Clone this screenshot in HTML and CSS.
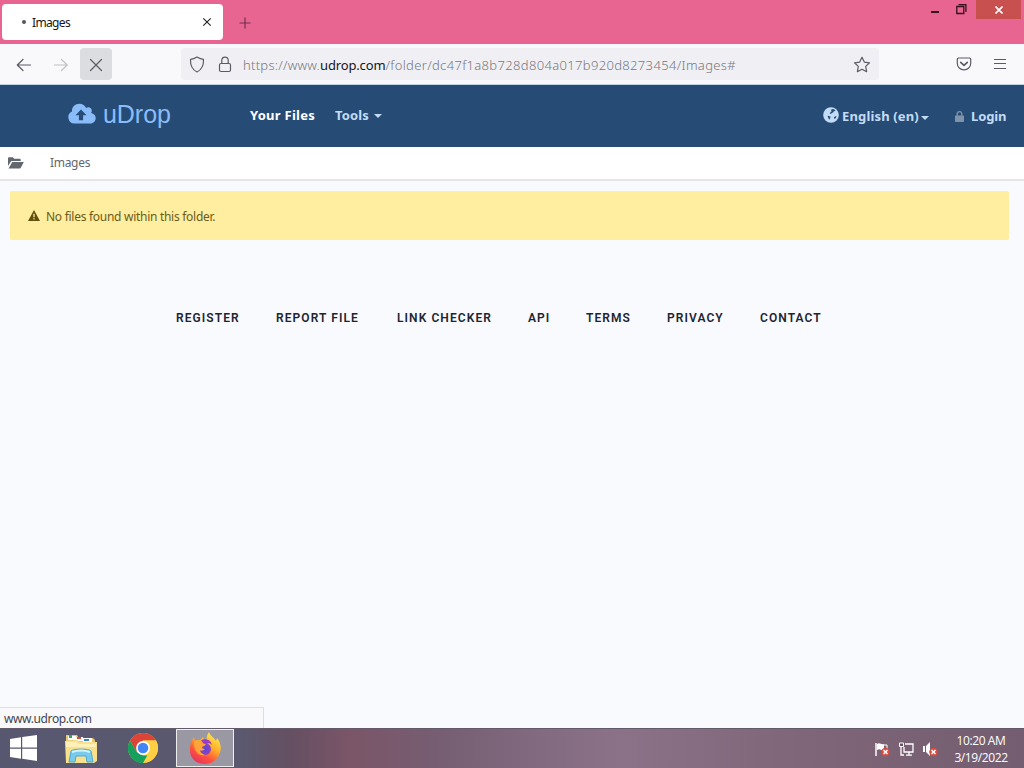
FILE: index.html
```html
<!DOCTYPE html>
<html lang="en">
<head>
<meta charset="utf-8">
<title>Images</title>
<link rel="stylesheet" href="styles.css">
</head>
<body>
<div class="screen">
  <header class="titlebar">
    <div class="tab"><span class="tab-dot"></span><span class="tab-title">Images</span>
      <svg class="tab-close" width="10" height="10" viewBox="0 0 10 10"><path d="M1.300 1.300l7.400 7.400M8.700 1.300L1.300 8.700" stroke="#222" stroke-width="1.1"/></svg>
    </div>
    <svg class="new-tab" width="12" height="12" viewBox="0 0 12 12"><path d="M6 .5v11M.5 6h11" stroke="#71324e" stroke-width="1.2"/></svg>
    <div class="window-controls">
      <svg width="8" height="19" viewBox="0 0 8 19"><path d="M0 12h8" stroke="#35101f" stroke-width="2"/></svg>
      <svg class="restore" width="11" height="19" viewBox="0 0 11 19"><path d="M.8 6.500h7v7h-7zM2.500 4.600h7.400V12" fill="none" stroke="#35101f" stroke-width="1.3"/></svg>
      <div class="window-close"><svg width="8" height="8" viewBox="0 0 8 8"><path d="M.5.5l7 7M7.500.5l-7 7" stroke="#fff" stroke-width="1.6"/></svg></div>
    </div>
  </header>

  <div class="toolbar">
    <svg class="back" width="16" height="14" viewBox="0 0 16 14"><path d="M14.500 7H1.500M7 1.500L1.300 7 7 12.500" class="line"/></svg>
    <svg class="forward" width="16" height="14" viewBox="0 0 16 14"><path d="M0 7h13M7.500 1.500L13.200 7l-5.700 5.500" class="line"/></svg>
    <div class="stop"><svg width="14" height="14" viewBox="0 0 14 14"><path d="M1.500 1.500l11 11M12.500 1.500l-11 11" class="line"/></svg></div>
    <div class="address">
      <svg class="shield" width="16" height="17" viewBox="0 0 16 17"><path d="M8 1c2 1.300 4 2.200 6.500 2.400C14.800 9.500 13 13.500 8 16 3 13.500 1.200 9.500 1.500 3.400 4 3.200 6 2.300 8 1z" class="line"/></svg>
      <svg class="padlock" width="14" height="17" viewBox="0 0 14 17"><rect x="1.500" y="7.500" width="11" height="8" rx="1.500" class="line"/><path d="M3.800 7.500V4.300a3.200 3.200 0 0 1 6.400 0v3.200" class="line"/></svg>
      <span class="url">https://www.<span class="host">udrop.com</span><span class="path">/folder/dc47f1a8b728d804a017b920d8273454/Images#</span></span>
      <svg class="star" width="18" height="17" viewBox="0 0 18 17"><path d="M9 1.300l2.300 4.800 5.200.7-3.800 3.600.9 5.300L9 13.200l-4.600 2.500.9-5.300-3.800-3.600 5.200-.7z" class="line"/></svg>
    </div>
    <svg class="pocket" width="16" height="14" viewBox="0 0 16 14"><path d="M2.500 1h11c.7 0 1.200.5 1.200 1.200v4.300a6.700 6.300 0 0 1-13.400 0V2.200C1.300 1.500 1.800 1 2.500 1z" class="line"/><path d="M4.700 5.300L8 8.300l3.300-3" class="line bold"/></svg>
    <svg class="menu" width="12" height="12" viewBox="0 0 12 12"><path d="M0 1.500h12M0 5.500h12M0 10.500h12" class="line"/></svg>
  </div>

  <nav class="navbar">
    <svg class="cloud" width="28" height="21" viewBox="0 0 28 21"><path fill="#8bbcfa" d="M6.500 20.500A6.300 6.300 0 0 1 4 8.500C3.800 4 7 .8 11.300.8c3.300 0 5.700 1.700 6.800 4.300 2.300-1.800 5.700-.3 5.700 2.700 0 .9-.2 1.600-.6 2.200 2.800.5 4.500 2.500 4.500 5 0 3-2.300 5.500-5.500 5.500z"/><path fill="#264c76" d="M13 6.500l5.500 5.700h-3.400v5h-4.200v-5H7.500z"/></svg>
    <span class="brand">uDrop</span>
    <span class="nav-files">Your Files</span>
    <span class="nav-tools">Tools</span><i class="caret tools-caret"></i>
    <svg class="globe" width="16" height="16" viewBox="0 0 16 16"><circle cx="8" cy="8" r="7.800" fill="#c3dcf5"/><path fill="#264c76" d="M9 2l2.500.6 1 1.400-1.800.2-.5 1.300-1.400.4-.8 1-1.200-.5.900-1.600L9 4.200 7.800 3.300zM4.500 8.700l1.500.2 1.600.8-.5 1.600-1 1.500-.8-2zM12.200 9.200l1.400.4-1.100 2-1.200.1-.4-1.200z"/></svg>
    <span class="nav-lang">English (en)</span><i class="caret lang-caret"></i>
    <svg class="lock" width="9" height="11" viewBox="0 0 9 11"><path d="M2.200 5V3a2.300 2.300 0 0 1 4.600 0v2" fill="none" stroke="#8193ab" stroke-width="1.300"/><rect y="4.500" width="9" height="6.500" rx=".7" fill="#8193ab"/></svg>
    <span class="nav-login">Login</span>
  </nav>

  <div class="crumbs">
    <svg class="folder" width="16" height="12" viewBox="0 0 16 12"><path fill="#626770" d="M0 9V1.500C0 .8.500.3 1.200.3h3.600L6.300 1.800h5.200c.7 0 1.200.5 1.200 1.200v1H4.200c-.8 0-1.300.3-1.600.9zM4.300 5h11.500l-3 5.800c-.2.500-.5.700-1 .7H.5z"/></svg>
    <span class="crumb">Images</span>
  </div>

  <main class="content">
    <div class="notice">
      <svg width="12" height="11" viewBox="0 0 12 11"><path fill="#5f500b" d="M6 0l6 11H0z"/><path d="M6 3.700v3.500M6 8.200v1.300" stroke="#ffeda0" stroke-width="1.300"/></svg>
      <span class="notice-text">No files found within this folder.</span>
    </div>
    <div class="footer-links">
      <a class="f1">REGISTER</a><a class="f2">REPORT FILE</a><a class="f3">LINK CHECKER</a><a class="f4">API</a><a class="f5">TERMS</a><a class="f6">PRIVACY</a><a class="f7">CONTACT</a>
    </div>
    <div class="status"><span>www.udrop.com</span></div>
  </main>

  <footer class="taskbar">
    <svg class="start" width="27" height="26" viewBox="0 0 27 26"><path fill="#fff" d="M0 4l11-1.700v10.200H0zM12.200 2.100L27 0v12.500H12.200zM0 13.700h11v10L0 22zM12.200 13.700H27V26l-14.800-2.200z"/></svg>
    <svg class="explorer" width="34" height="31" viewBox="0 0 34 31">
      <path fill="#e8c66a" d="M2 2h11l2 3h14l2 2v22H2z"/><path fill="#fff" d="M4 3h8v4H4zM11 4h8v4h-8zM19 5h9v4h-9z"/><path fill="#31a84b" d="M5 2h3v3H5z"/><path fill="#d8492e" d="M13 4h4v2h-4z"/><path fill="#3385d0" d="M20 6h5v2h-5z"/>
      <path fill="#f8e08d" d="M1 8l12-1 3 2h17v19l-3 2H2z"/><path fill="#fff0b7" d="M2 9h10l3 2h17v3H2z"/>
      <path fill="#78cbed" stroke="#4ba9d5" d="M5 29l2-11c2-2.500 18-2.500 20 0l2 11h-6l-1-6H12l-1 6z"/><path d="M8 19q9-3 18 0" fill="none" stroke="#d4f4ff" stroke-width="2"/>
    </svg>
    <svg class="chrome" width="30" height="30" viewBox="0 0 30 30"><circle cx="15" cy="15" r="15" fill="#ffd044"/><path fill="#db4437" d="M2 7.500a15 15 0 0 1 26 0H15L8.500 19z"/><path fill="#16a05d" d="M2 7.500L8.500 18.800 15 22.500h6L16 30A15 15 0 0 1 2 7.500z"/><path fill="#ffd044" d="M15 7.500h13A15 15 0 0 1 15 30l6.500-11.200z"/><circle cx="15" cy="15" r="6.900" fill="#fff"/><circle cx="15" cy="15" r="5.300" fill="#4285f4"/></svg>
    <div class="active-app">
      <svg width="32" height="32" viewBox="0 0 32 32">
        <defs><linearGradient id="fire" x1=".8" y1="0" x2=".2" y2="1"><stop stop-color="#fff14f"/><stop offset=".4" stop-color="#ffad29"/><stop offset=".7" stop-color="#ff513e"/><stop offset="1" stop-color="#e42d67"/></linearGradient><radialGradient id="core"><stop stop-color="#5b45d9"/><stop offset="1" stop-color="#8c42c6"/></radialGradient></defs>
        <path fill="url(#fire)" d="M20 0c1 4 5 5 7 9l1-3c4 5 5 11 2 17-3 6-8 9-14 9C6 32 0 25 1 16c0-5 2-8 4-11l1 4c2-1 3-1 5-1l3-3c0 2 2 3 4 4-1-3 0-6 2-9z"/>
        <circle cx="16" cy="17" r="6" fill="url(#core)"/><path fill="#ffa436" d="M5 9c4-2 7 0 8 2l4 1c-1 2-3 2-4 3 0 1 1 2 3 2-2 2-4 2-5 1 0 2 2 4 5 5-6 2-12-4-11-14z"/><path fill="#993bc5" d="M12 8c5-2 10 0 11 5-2-2-4-2-6-1l-3-1z"/>
      </svg>
    </div>
    <div class="tray">
      <svg width="17" height="16" viewBox="0 0 17 16"><path d="M2 2v13" stroke="#fff" stroke-width="1.500"/><path fill="#fff" d="M3 3c3-2 4 1 7 0v6c-3 1-4-2-7 0z"/><path d="M10 4h3v4" stroke="#fff" fill="none"/><circle cx="11.500" cy="11" r="4.300" fill="#d84c42"/><path d="M9.500 9l4 4M13.500 9l-4 4" stroke="#fff" stroke-width="1.500"/></svg>
      <svg width="17" height="16" viewBox="0 0 17 16"><path d="M7 3h8v8H6V6M11 11v3M8 14.200h6M3 5v9h3" fill="none" stroke="#fff" stroke-width="1.300"/><path d="M1.500 2h4v3.500h-4z" fill="#6b5366" stroke="#fff"/></svg>
      <svg width="17" height="16" viewBox="0 0 17 16"><path fill="#fff" d="M1 5h2v6H1zM4 5l4-4v14l-4-4z"/><circle cx="11.500" cy="11" r="4.300" fill="#d84c42"/><path d="M9.500 9l4 4M13.500 9l-4 4" stroke="#fff" stroke-width="1.500"/></svg>
    </div>
    <div class="clock"><span class="time">10:20 AM</span><span class="date">3/19/2022</span></div>
  </footer>
</div>
</body>
</html>
```

FILE: styles.css
```css
* { box-sizing: border-box; }
body { margin: 0; font-family: "Noto Sans", sans-serif; }
svg { display: block; flex: none; }
span, a { white-space: nowrap; }
.screen { width: 1024px; height: 768px; display: flex; flex-direction: column; overflow: hidden; background: #f9fafe; }
.line { fill: none; stroke: #5b5b66; stroke-width: 1.2; stroke-linecap: round; stroke-linejoin: round; }
.bold { stroke-width: 1.7; }

.titlebar { height: 44px; display: flex; align-items: flex-start; background: #e76590; }
.tab { width: 221px; height: 36px; margin: 4px 0 0 2px; padding: 0 11px 0 20px; display: flex; align-items: center; background: #fff; border-radius: 4px; }
.tab-dot { width: 4px; height: 4px; border-radius: 50%; background: #55555c; }
.tab-title { margin-left: 6px; padding-top: 1px; font-size: 12px; letter-spacing: -.65px; color: #15141a; }
.tab-close { margin-left: auto; }
.new-tab { margin: 17px 0 0 16px; }
.window-controls { margin-left: auto; margin-right: 3px; display: flex; }
.restore { margin-left: 17px; }
.window-close { width: 45px; height: 19px; margin-left: 9px; display: flex; align-items: center; justify-content: center; background: #c8504f; }

.toolbar { height: 41px; display: flex; align-items: center; background: #f9f9fb; border-bottom: 1px solid #bdd3e4; }
.back { margin-left: 16px; margin-top: 1px; }
.forward { margin-left: 22px; margin-top: 1px; opacity: .35; }
.stop { width: 32px; height: 32px; margin-left: 10px; padding-top: 1px; display: flex; align-items: center; justify-content: center; background: #dcdde0; border-radius: 4px; }
.address { width: 698px; height: 32px; margin-left: 69px; padding: 0 8px; display: flex; align-items: center; background: #f0f0f4; border-radius: 4px; }
.padlock { margin-left: 13px; }
.url { margin-left: 11px; padding-top: 2px; font-size: 13px; font-weight: 300; letter-spacing: .25px; color: #777780; }
.host { color: #15141a; font-weight: 400; letter-spacing: -.15px; }
.path { letter-spacing: .34px; }
.star { margin-left: auto; }
.pocket { margin-left: 77px; }
.menu { margin-left: 22px; }

.navbar { height: 62px; padding-bottom: 2px; display: flex; align-items: center; background: #264c76; font-family: "Noto Sans", sans-serif; font-weight: 700; font-size: 13px; color: #c3dcf5; }
.cloud { margin-left: 68px; margin-bottom: 4px; }
.brand { width: 69px; margin-left: 7px; margin-bottom: 1px; font: 25px "Liberation Sans", sans-serif; letter-spacing: -.05px; color: #8bbcfa; }
.nav-files { width: 65px; margin-left: 78px; letter-spacing: .25px; color: #fff; }
.nav-tools { width: 34px; margin-left: 20px; letter-spacing: .15px; }
.caret { border: 4px solid transparent; border-top-color: currentColor; border-bottom: 0; }
.tools-caret { margin-left: 5px; margin-top: 2px; }
.globe { margin-left: auto; margin-bottom: 1px; }
.nav-lang { width: 78px; margin-left: 3px; letter-spacing: .15px; }
.lang-caret { margin-left: 1px; margin-top: 5px; }
.lock { margin-left: 26px; margin-top: 3px; }
.nav-login { width: 35px; margin-left: 7px; margin-right: 18px; letter-spacing: -.1px; }
.nav-lang, .nav-login { padding-top: 1px; }

.crumbs { height: 34px; padding-bottom: 1px; display: flex; align-items: center; background: #fff; border-bottom: 2px solid #e5e5e9; font-size: 12px; color: #626770; }
.folder { margin-left: 8px; }
.crumb { margin-left: 26px; letter-spacing: -.3px; }

.content { height: 547px; display: flex; flex-direction: column; padding-top: 10px; background: #f9fafe; }
.notice { height: 49px; margin: 0 15px 0 10px; padding-left: 18px; display: flex; align-items: center; background: #ffeda0; border-radius: 2px; font-size: 12px; color: #6b5c17; }
.notice-text { margin-left: 6px; padding-top: 1px; letter-spacing: -.28px; }
.footer-links { height: 20px; margin: 68px 0 0 176px; display: flex; align-items: center; font-family: Roboto, sans-serif; font-weight: 600; font-size: 12px; letter-spacing: 1.08px; color: #1c2532; }
.f1 { width: 100px; }
.f2 { width: 121px; }
.f3 { width: 131px; }
.f4 { width: 58px; }
.f5 { width: 81px; }
.f6 { width: 93px; }
.status { width: 264px; height: 21px; margin-top: auto; padding: 1px 0 0 4px; display: flex; align-items: center; border: 1px solid #dedee2; border-width: 1px 1px 0 0; background: #f9f9fb; font-size: 12px; letter-spacing: -.38px; color: #45454c; }

.taskbar { height: 40px; display: flex; align-items: center; background: linear-gradient(to right, #57576f 0, #5a596f 240px, #654f62 290px, #7b5568 350px, #765e73 445px, #826a80 540px, #8b7288 620px, #806779 780px, #745d70 1024px); box-shadow: inset 0 1px #625969; }
.start { margin-left: 10px; margin-right: 1px; }
.explorer { margin-left: 26px; }
.chrome { margin-left: 30px; }
.active-app { width: 58px; height: 38px; margin-left: 18px; display: flex; align-items: center; justify-content: center; border: 1px solid #eee; background: #9998a3; }
.tray { margin-left: auto; padding-top: 2px; display: flex; gap: 7px; }
.clock { width: 56px; margin-left: 14px; margin-right: 15px; padding-top: 2px; display: flex; flex-direction: column; align-items: center; font: 12px/17px "Open Sans", sans-serif; color: #fff; letter-spacing: -.4px; }
```
